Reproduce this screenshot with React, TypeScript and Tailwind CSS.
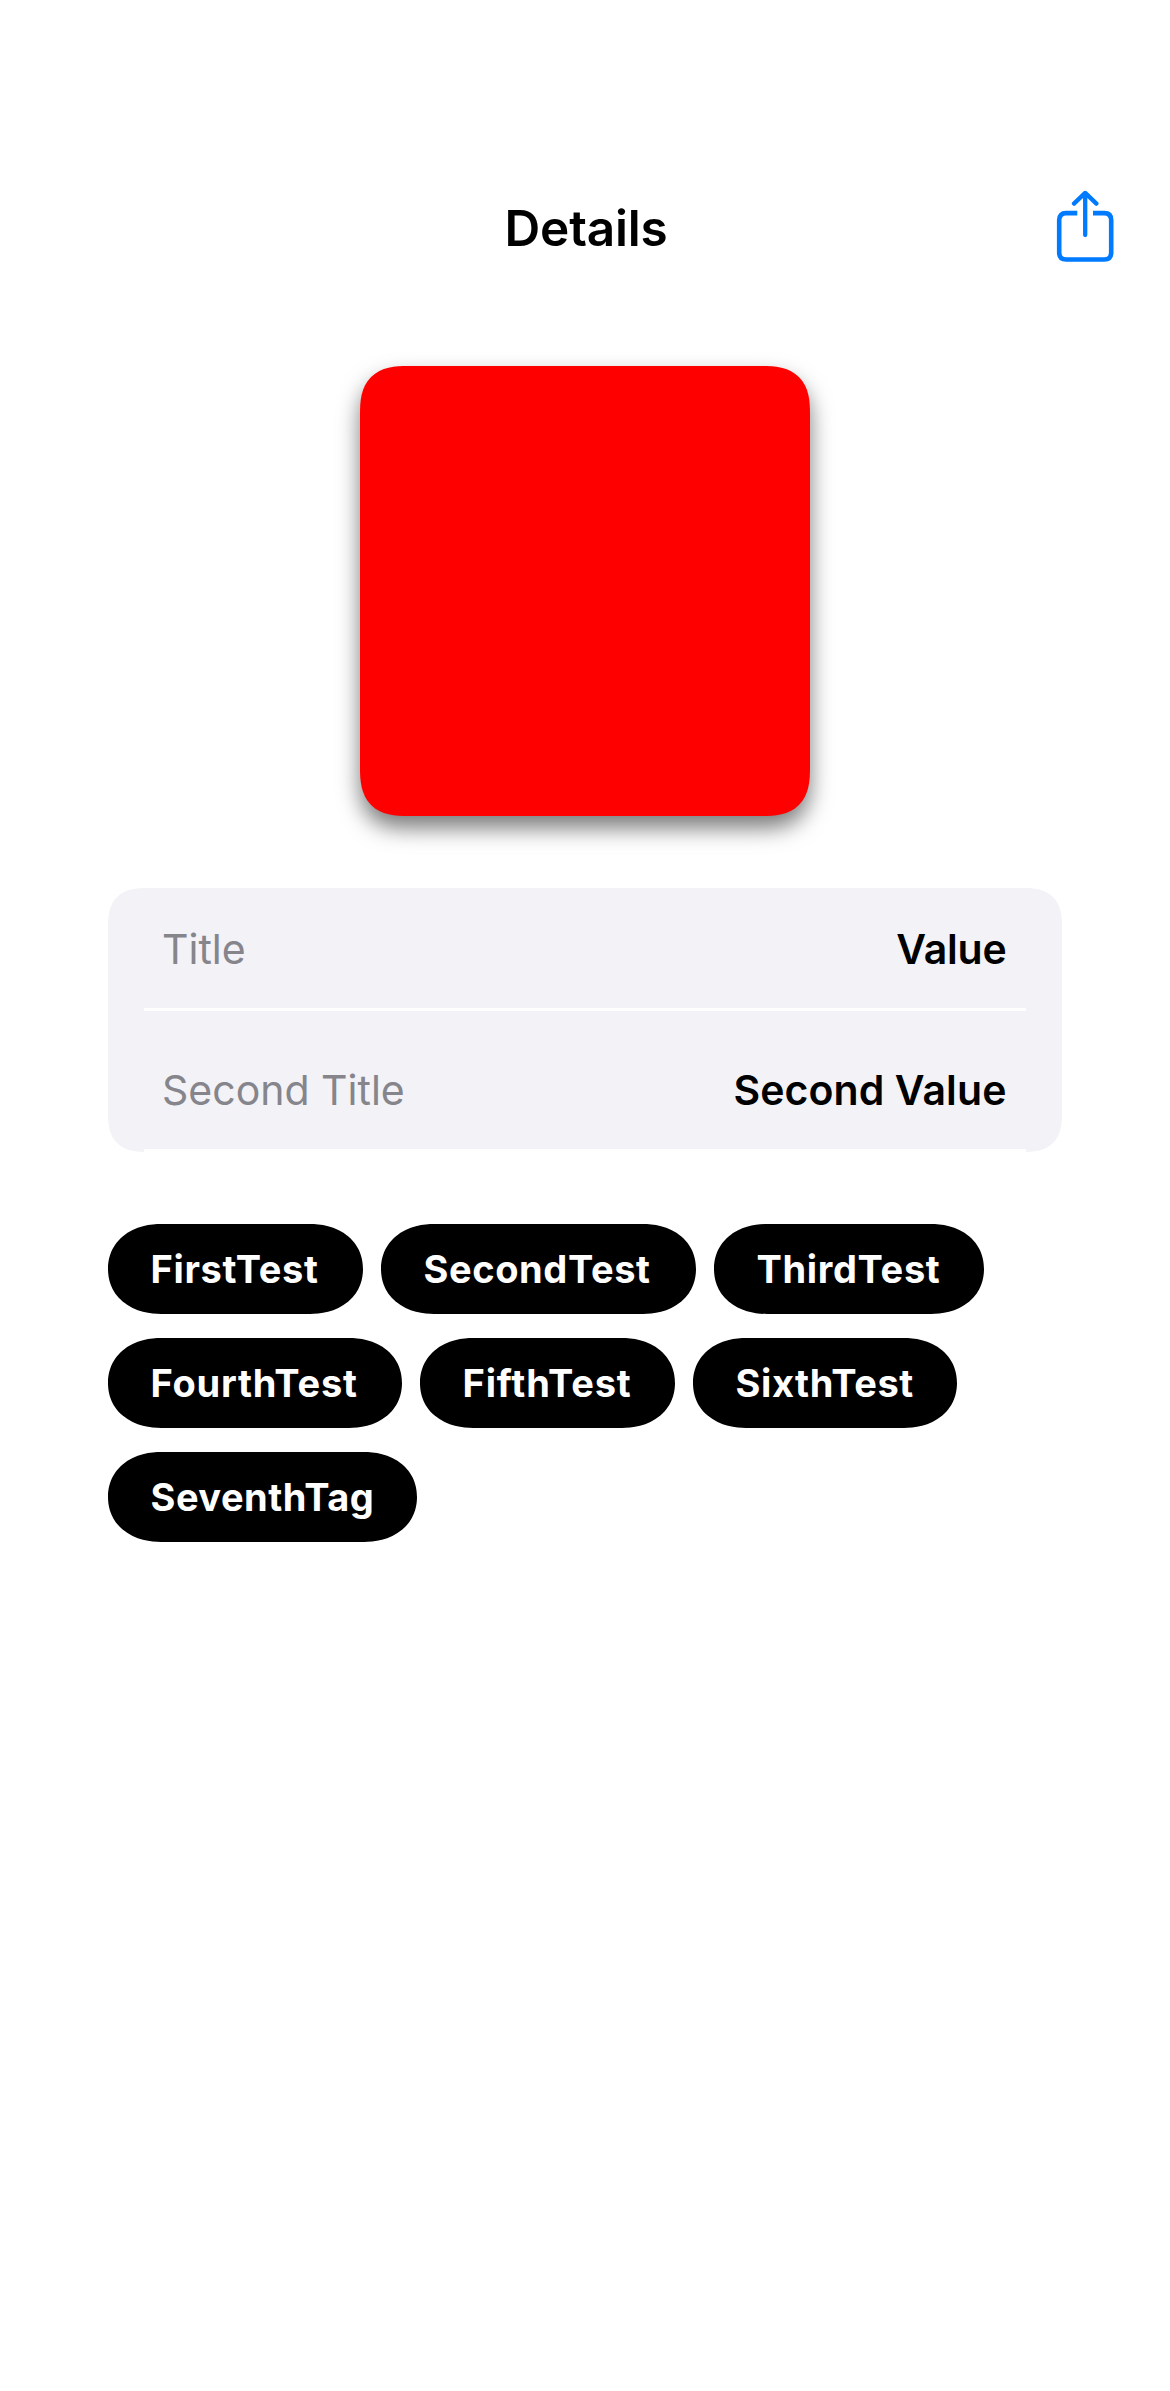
const rows = [
  { title: "Title", value: "Value", valueTracking: "tracking-[-0.2px]" },
  { title: "Second Title", value: "Second Value", valueTracking: "tracking-[0.1px]" },
];

const tagRows = [
  [
    { label: "FirstTest", style: "w-[255px] tracking-[0.65px]" },
    { label: "SecondTest", style: "w-[315px] tracking-[0.6px]" },
    { label: "ThirdTest", style: "w-[270px] tracking-[0.65px]" },
  ],
  [
    { label: "FourthTest", style: "w-[294px] tracking-[0.75px]" },
    { label: "FifthTest", style: "w-[255px] tracking-[0.85px]" },
    { label: "SixthTest", style: "w-[264px] tracking-[0.6px]" },
  ],
  [{ label: "SeventhTag", style: "w-[309px] tracking-[0.5px]" }],
];

function ShareIcon() {
  return (
    <svg width="60" height="76" viewBox="0 0 60 76" fill="none" stroke="#007aff" strokeWidth="4.6">
      <path d="M22.3 23.1H11.1Q4.2 23.1 4.2 30.1V62.6Q4.2 69.5 11.1 69.5H49.3Q56.2 69.5 56.2 62.6V30.1Q56.2 23.1 49.3 23.1H38" />
      <path d="M30.2 45V3.5M19 13.6L30.2 2.9L41.4 13.6" strokeWidth="4.3" strokeLinecap="round" strokeLinejoin="round" />
    </svg>
  );
}

export default function App() {
  return (
    <main className="min-h-[2391px] w-[1170px] bg-white pt-[162px] font-['Inter',sans-serif] text-black">
      <header className="grid h-[132px] grid-cols-[1fr_auto_1fr] items-center px-[55px]">
        <span />
        <h1 className="pl-[2px] text-[49.5px] leading-[60px] font-semibold tracking-[-0.18px]">Details</h1>
        <button aria-label="Share" className="justify-self-end">
          <ShareIcon />
        </button>
      </header>

      <div className="mx-auto mt-[72px] size-[450px] rounded-[38px] bg-[#ff0000] shadow-[0_12px_22px_rgba(0,0,0,0.52)] supports-[corner-shape:squircle]:rounded-[48px] supports-[corner-shape:squircle]:[corner-shape:superellipse(1.4)]" />

      <section className="mx-[108px] mt-[72px] flex flex-col gap-[18px] rounded-[32px] bg-[#f2f2f7] px-9 supports-[corner-shape:squircle]:rounded-[39px] supports-[corner-shape:squircle]:[corner-shape:superellipse(1.4)]">
        {rows.map((row) => (
          <div
            key={row.title}
            className="flex h-[123px] items-center justify-between border-b-[3px] border-white pt-[2px] pr-[19.5px] pl-[18px] text-[41px] leading-[50px]"
          >
            <span className="text-[#85858b]">{row.title}</span>
            <span className={`font-semibold ${row.valueTracking}`}>{row.value}</span>
          </div>
        ))}
      </section>

      <section className="mx-[108px] mt-[72px] flex flex-col gap-6">
        {tagRows.map((tags) => (
          <div key={tags[0].label} className="flex gap-[18px]">
            {tags.map((tag) => (
              <span
                key={tag.label}
                className={`flex h-[90px] items-center rounded-[50px/45px] bg-black pl-[42.5px] text-[38px] font-bold whitespace-nowrap text-white supports-[corner-shape:squircle]:rounded-[53px/45px] supports-[corner-shape:squircle]:[corner-shape:superellipse(1.1)] ${tag.style}`}
              >
                {tag.label}
              </span>
            ))}
          </div>
        ))}
      </section>
    </main>
  );
}
